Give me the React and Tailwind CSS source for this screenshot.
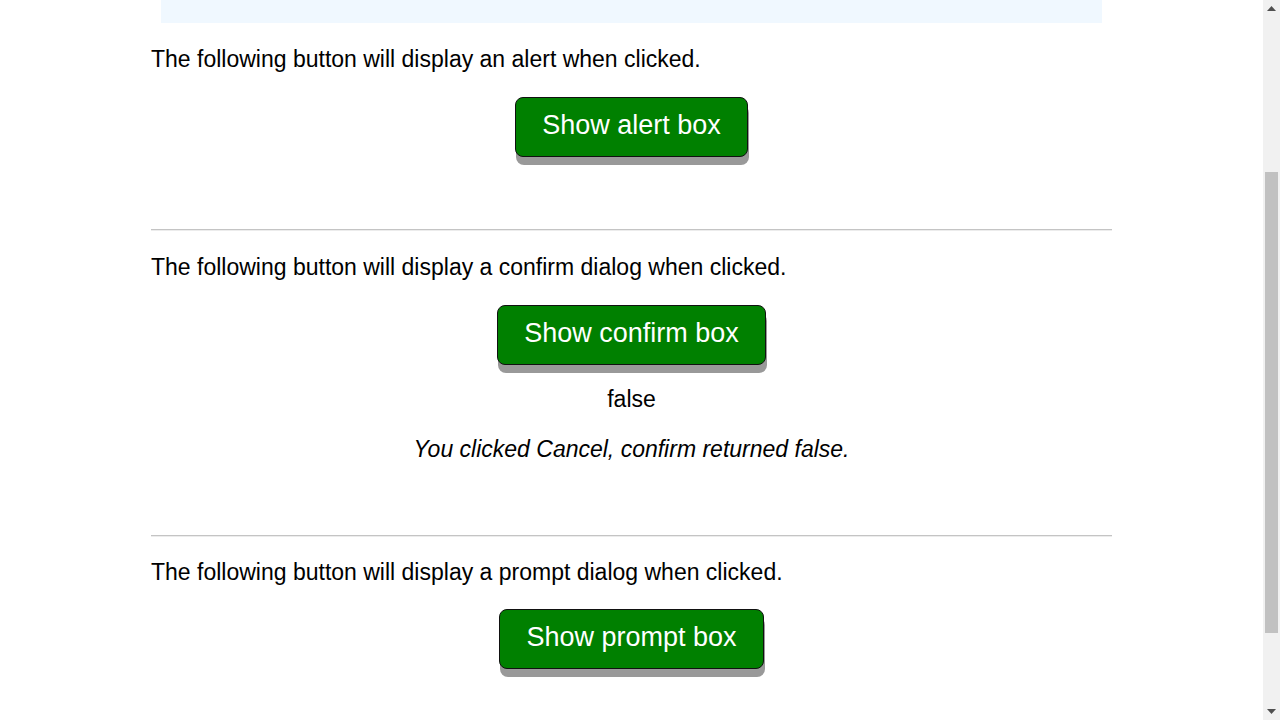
import React, { useState } from 'react';

function DemoButton({ label, onClick }) {
  return (
    <button
      onClick={onClick}
      className="rounded-[8px] border border-[#111] bg-[#008000] px-[26px] pt-[9px] pb-[13px] text-[27px] leading-[36px] text-white shadow-[1px_8px_0_#999]"
    >
      {label}
    </button>
  );
}

function Scrollbar() {
  return (
    <div className="flex h-full w-[17px] flex-col items-center bg-[#f1f1f1]">
      <div className="flex h-[17px] w-full items-center justify-center">
        <svg width="9" height="5" viewBox="0 0 9 5"><path d="M4.5 0L9 5H0z" fill="#505050" /></svg>
      </div>
      <div className="h-[155px]" />
      <div className="h-[461px] w-[13px] bg-[#c1c1c1]" />
      <div className="flex-1" />
      <div className="flex h-[17px] w-full items-center justify-center">
        <svg width="9" height="5" viewBox="0 0 9 5"><path d="M0 0H9L4.5 5z" fill="#505050" /></svg>
      </div>
    </div>
  );
}

export default function App() {
  const [result, setResult] = useState('false');
  const [message, setMessage] = useState('You clicked Cancel, confirm returned false.');

  return (
    <div className="flex h-[720px] w-[1280px] overflow-hidden bg-white font-['Liberation_Sans',Arial,sans-serif] text-black">
      <div className="flex-1">
        <div className="mx-auto w-[961px] text-[23px] leading-[26px]">
          <div className="mx-[10px] h-[23px] bg-[#f0f8ff]" />

          {/* alert */}
          <p className="mt-[23px]">The following button will display an alert when clicked.</p>
          <div className="mt-[25px] flex justify-center">
            <DemoButton label="Show alert box" onClick={() => {}} />
          </div>

          <hr className="mt-[72px] border-t border-b border-t-[#c4c4c4] border-b-[#ececec]" />

          {/* confirm */}
          <p className="mt-[23px]">The following button will display a confirm dialog when clicked.</p>
          <div className="mt-[25px] flex justify-center">
            <DemoButton
              label="Show confirm box"
              onClick={() => {
                setResult('false');
                setMessage('You clicked Cancel, confirm returned false.');
              }}
            />
          </div>
          <p className="mt-[21px] text-center">{result}</p>
          <p className="mt-[24px] text-center italic">{message}</p>

          <hr className="mt-[73px] border-t border-b border-t-[#c4c4c4] border-b-[#ececec]" />

          {/* prompt */}
          <p className="mt-[22px]">The following button will display a prompt dialog when clicked.</p>
          <div className="mt-[24px] flex justify-center">
            <DemoButton label="Show prompt box" onClick={() => {}} />
          </div>
        </div>
      </div>
      <Scrollbar />
    </div>
  );
}
